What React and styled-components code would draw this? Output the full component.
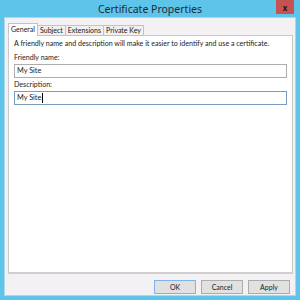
import styled, { createGlobalStyle } from 'styled-components';

const Global = createGlobalStyle`
  html, body { margin: 0; padding: 0; }
  body {
    width: 300px;
    height: 300px;
    overflow: hidden;
    font-family: Lato, "Noto Sans", sans-serif;
  }
`;

const Window = styled.div`
  width: 300px;
  height: 300px;
  box-sizing: border-box;
  background: #5ec4ea;
  display: flex;
  flex-direction: column;
  padding: 0 4px 4px 4px;
`;

const TitleBar = styled.div`
  height: 17px;
  display: flex;
  align-items: center;
  justify-content: center;
  position: relative;
  font-family: "Noto Sans", sans-serif;
  font-size: 10.5px;
  color: #1f2a33;
`;

const CloseButton = styled.div`
  position: absolute;
  top: 0;
  right: 2px;
  width: 18px;
  height: 14px;
  background: #c75252;
  color: #3a1010;
  font-size: 8px;
  font-weight: bold;
  display: flex;
  align-items: center;
  justify-content: center;
`;

const Client = styled.div`
  flex: 1;
  background: #f4f1f5;
  border: 1px solid #a9d8ea;
  display: flex;
  flex-direction: column;
  padding: 5px 2px 0 3px;
`;

const TabStrip = styled.div`
  display: flex;
  align-items: flex-end;
  height: 13px;
  margin-bottom: -1px;
  position: relative;
  z-index: 1;
`;

const Tab = styled.div`
  height: ${(p) => (p.$active ? '13px' : '11px')};
  box-sizing: border-box;
  padding: 0 2px;
  margin-left: ${(p) => (p.$active ? '0' : '-1px')};
  border: 1px solid #c3c3c3;
  border-bottom: ${(p) => (p.$active ? '1px solid #ffffff' : '1px solid #c3c3c3')};
  background: ${(p) => (p.$active ? '#ffffff' : '#f0f0f0')};
  font-size: 7px;
  line-height: ${(p) => (p.$active ? '11px' : '9px')};
  color: #1a1a1a;
  white-space: nowrap;
`;

const Panel = styled.div`
  height: 239px;
  box-sizing: border-box;
  background: #ffffff;
  border: 1px solid #c9c9c9;
  border-bottom: 2px solid #cfcfcf;
  padding: 3px 5px 0 5px;
  font-size: 7.1px;
  color: #1a1a1a;
`;

const Info = styled.div`
  line-height: 10px;
  margin-bottom: 4px;
  white-space: nowrap;
`;

const Label = styled.div`
  line-height: 10px;
  margin-bottom: 1px;
`;

const Field = styled.div`
  height: 14px;
  box-sizing: border-box;
  border: 1px solid ${(p) => (p.$focused ? '#7a9cbf' : '#adadad')};
  font-size: 7.3px;
  line-height: 12px;
  padding-left: 2px;
  margin-bottom: 2px;
  display: flex;
  align-items: center;
`;

const Caret = styled.span`
  display: inline-block;
  width: 1px;
  height: 10px;
  background: #000;
  margin-left: 1px;
`;

const ButtonRow = styled.div`
  display: flex;
  justify-content: flex-end;
  gap: 5px;
  padding: 6px 3px 0 0;
`;

const Button = styled.div`
  width: 42px;
  height: 14px;
  box-sizing: border-box;
  border: 1px solid ${(p) => (p.$default ? '#7eb4ea' : '#acacac')};
  background: #e1e1e1;
  font-size: 7px;
  display: flex;
  align-items: center;
  justify-content: center;
  color: #1a1a1a;
`;

export default function App() {
  return (
    <>
      <Global />
      <Window>
        <TitleBar>
          Certificate Properties
          <CloseButton>x</CloseButton>
        </TitleBar>
        <Client>
          <TabStrip>
            <Tab $active>General</Tab>
            <Tab>Subject</Tab>
            <Tab>Extensions</Tab>
            <Tab>Private Key</Tab>
          </TabStrip>
          <Panel>
            <Info>
              A friendly name and description will make it easier to identify and use a certificate.
            </Info>
            <Label>Friendly name:</Label>
            <Field>My Site</Field>
            <Label>Description:</Label>
            <Field $focused>
              My Site
              <Caret />
            </Field>
          </Panel>
          <ButtonRow>
            <Button $default>OK</Button>
            <Button>Cancel</Button>
            <Button>Apply</Button>
          </ButtonRow>
        </Client>
      </Window>
    </>
  );
}
